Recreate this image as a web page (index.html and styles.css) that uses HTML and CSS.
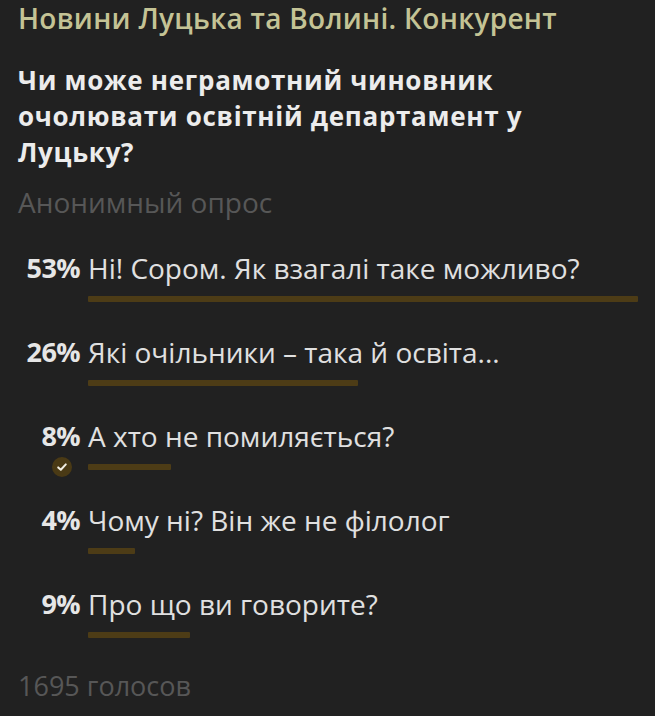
FILE: index.html
```html
<!DOCTYPE html>
<html lang="uk">
<head>
    <meta charset="UTF-8">
    <meta name="viewport" content="width=device-width, initial-scale=1.0">
    <title>Опитування</title>
    <link rel="stylesheet" href="styles.css">
</head>
<body>
    <div class="poll">
        <div class="channel">Новини Луцька та Волині. Конкурент</div>
        <div class="question">Чи може неграмотний чиновник очолювати освітній департамент у Луцьку?</div>
        <div class="meta">Анонимный опрос</div>

        <div class="options">
            <div class="option">
                <span class="percent">53%</span>
                <span class="label">Ні! Сором. Як взагалі таке можливо?</span>
                <span class="mark"></span>
                <div class="track"><div class="bar" style="width: 100%"></div></div>
            </div>
            <div class="option">
                <span class="percent">26%</span>
                <span class="label">Які очільники – така й освіта...</span>
                <span class="mark"></span>
                <div class="track"><div class="bar" style="width: 49%"></div></div>
            </div>
            <div class="option">
                <span class="percent">8%</span>
                <span class="label">А хто не помиляється?</span>
                <span class="mark">
                    <span class="chosen">
                        <svg width="12" height="12" viewBox="0 0 12 12"><path d="M2.2 6.4 L4.8 8.8 L9.8 3.4" fill="none" stroke="#f2efe4" stroke-width="2" stroke-linecap="round" stroke-linejoin="round"/></svg>
                    </span>
                </span>
                <div class="track"><div class="bar" style="width: 15%"></div></div>
            </div>
            <div class="option">
                <span class="percent">4%</span>
                <span class="label">Чому ні? Він же не філолог</span>
                <span class="mark"></span>
                <div class="track"><div class="bar" style="width: 8.5%"></div></div>
            </div>
            <div class="option">
                <span class="percent">9%</span>
                <span class="label">Про що ви говорите?</span>
                <span class="mark"></span>
                <div class="track"><div class="bar" style="width: 18.5%"></div></div>
            </div>
        </div>

        <div class="votes">1695 голосов</div>
    </div>
</body>
</html>
```
FILE: styles.css
```css
body {
    margin: 0;
    background: #212121;
    font-family: 'Open Sans', 'Noto Sans', sans-serif;
    color: #e4e4e4;
}
.poll {
    padding: 1px 17px 0 18px;
}
.channel {
    font-size: 28px;
    line-height: 34px;
    font-weight: 600;
    letter-spacing: 0.3px;
    color: #c4c395;
    white-space: nowrap;
}
.question {
    margin-top: 27px;
    font-size: 26px;
    line-height: 36px;
    font-weight: 700;
    letter-spacing: 0.7px;
    color: #ececec;
    max-width: 560px;
}
.meta {
    margin-top: 15px;
    font-size: 28px;
    line-height: 34px;
    color: #575757;
}
.options {
    margin-top: 31px;
    display: flex;
    flex-direction: column;
    gap: 32px;
}
.option {
    display: grid;
    grid-template-columns: 62px 1fr;
    column-gap: 8px;
    row-gap: 10px;
    align-items: center;
}
.percent {
    text-align: right;
    font-size: 27px;
    line-height: 36px;
    font-weight: 700;
    letter-spacing: -0.6px;
    color: #e6e6e6;
    white-space: nowrap;
}
.label {
    font-size: 28px;
    line-height: 36px;
    color: #e0e0e0;
    white-space: nowrap;
}
.mark {
    height: 6px;
    display: flex;
    align-items: center;
    justify-content: flex-end;
    padding-right: 8px;
}
.chosen {
    width: 20px;
    height: 20px;
    border-radius: 50%;
    background: #4a3a15;
    display: flex;
    align-items: center;
    justify-content: center;
    flex-shrink: 0;
}
.track {
    height: 6px;
}
.bar {
    height: 6px;
    background: #4d3c16;
    border-radius: 1px;
}
.votes {
    margin-top: 31px;
    font-size: 27px;
    line-height: 34px;
    color: #575757;
}
```
